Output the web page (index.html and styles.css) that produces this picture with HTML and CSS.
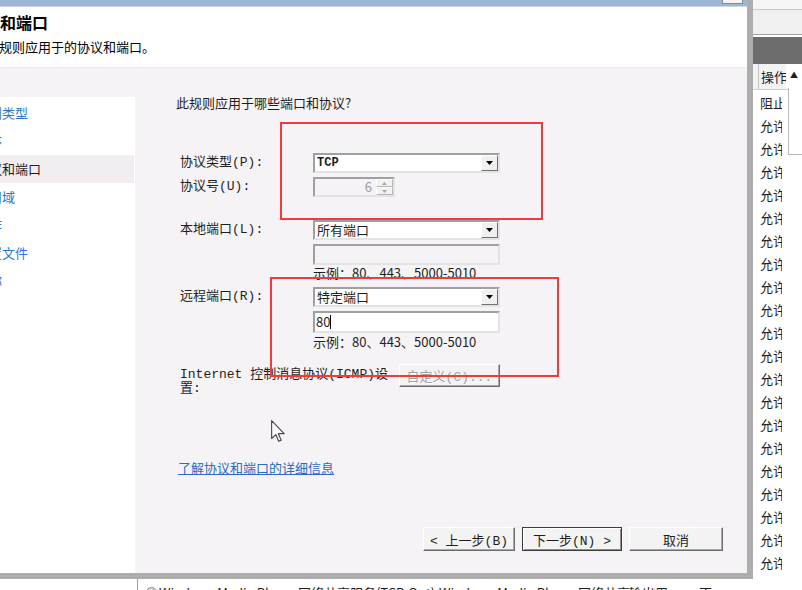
FILE: index.html
```html
<!DOCTYPE html>
<html lang="zh-CN">
<head>
    <meta charset="UTF-8">
    <meta name="viewport" content="width=device-width, initial-scale=1.0">
    <title>新建入站规则向导 - 协议和端口</title>
    <link rel="stylesheet" href="styles.css">
</head>
<body>

<div class="screen">
    <div class="main">
        <!-- Wizard window -->
        <div class="wizard">
            <div class="titlebar"><div class="close-btn"></div></div>

            <div class="header">
                <h1 class="page-title">协议和端口</h1>
                <p class="page-desc">指定此规则应用于的协议和端口。</p>
            </div>

            <div class="wizard-body">
                <!-- Steps -->
                <div class="steps">
                    <ul class="step-list">
                        <li class="step">规则类型</li>
                        <li class="step">程序</li>
                        <li class="step current">协议和端口</li>
                        <li class="step">作用域</li>
                        <li class="step">操作</li>
                        <li class="step">配置文件</li>
                        <li class="step">名称</li>
                    </ul>
                </div>

                <!-- Page content -->
                <div class="content">
                    <p class="question">此规则应用于哪些端口和协议?</p>

                    <div class="form">
                        <div class="row">
                            <label class="label">协议类型(P):</label>
                            <div class="field">
                                <div class="combo">
                                    <span class="combo-text mono">TCP</span>
                                    <span class="drop-btn"><svg width="7" height="4" viewBox="0 0 7 4"><path d="M0 0h7L3.5 4z" fill="#000"/></svg></span>
                                </div>
                            </div>
                        </div>

                        <div class="row row-number">
                            <label class="label">协议号(U):</label>
                            <div class="field">
                                <div class="spinner">
                                    <span class="spin-value">6</span>
                                    <span class="spin-btns">
                                        <span class="spin-btn"><svg width="5" height="3" viewBox="0 0 5 3"><path d="M0 3h5L2.5 0z" fill="#a8a8a8"/></svg></span>
                                        <span class="spin-btn"><svg width="5" height="3" viewBox="0 0 5 3"><path d="M0 0h5L2.5 3z" fill="#a8a8a8"/></svg></span>
                                    </span>
                                </div>
                            </div>
                        </div>

                        <div class="row row-local">
                            <label class="label">本地端口(L):</label>
                            <div class="field">
                                <div class="combo">
                                    <span class="combo-text">所有端口</span>
                                    <span class="drop-btn"><svg width="7" height="4" viewBox="0 0 7 4"><path d="M0 0h7L3.5 4z" fill="#000"/></svg></span>
                                </div>
                                <div class="textbox disabled"></div>
                                <div class="example">示例：80、443、5000-5010</div>
                            </div>
                        </div>

                        <div class="row row-remote">
                            <label class="label">远程端口(R):</label>
                            <div class="field">
                                <div class="combo">
                                    <span class="combo-text">特定端口</span>
                                    <span class="drop-btn"><svg width="7" height="4" viewBox="0 0 7 4"><path d="M0 0h7L3.5 4z" fill="#000"/></svg></span>
                                </div>
                                <div class="textbox active"><span class="typed">80</span><span class="caret"></span></div>
                                <div class="example second">示例：80、443、5000-5010</div>
                            </div>
                        </div>

                        <div class="row row-icmp">
                            <label class="label label-wide">Internet 控制消息协议(ICMP)设置:</label>
                            <button class="btn btn-disabled" disabled>自定义(C)...</button>
                        </div>
                    </div>

                    <a class="more-link" href="#">了解协议和端口的详细信息</a>

                    <div class="buttons">
                        <button class="btn btn-back">&lt; 上一步(B)</button>
                        <button class="btn btn-next">下一步(N) &gt;</button>
                        <button class="btn btn-cancel">取消</button>
                    </div>

                    <!-- annotation boxes and mouse pointer -->
                    <div class="mark mark-protocol"></div>
                    <div class="mark mark-remote"></div>
                    <svg class="cursor" width="14" height="22" viewBox="0 0 12 19">
                        <path d="M0.5 0.5V16l3.6-3.4 2.5 5.8 2.2-1-2.5-5.6h5z" fill="#fff" stroke="#4a4a4a" stroke-width="1" stroke-linejoin="round"/>
                    </svg>
                </div>
            </div>
        </div>

        <!-- Rule list behind the wizard -->
        <div class="bottom-list">
            <div class="bl-left"></div>
            <div class="bl-row">
                <span class="bl-icon"></span>
                <span class="bl-name">Windows Media Player 网络共享服务(TCP-Out)</span>
                <span class="bl-group">Windows Media Player 网络共享</span>
                <span class="bl-dir">输出用</span>
                <span class="bl-flag">否</span>
            </div>
        </div>
    </div>

    <!-- Actions column on the right -->
    <div class="side">
        <div class="side-top"></div>
        <div class="side-toolbar"></div>
        <div class="side-band"></div>
        <div class="side-head">
            <span class="col-name">操作</span>
            <span class="sort">▲</span>
        </div>
        <ul class="side-rows">
            <li>阻止</li>
            <li>允许</li>
            <li>允许</li>
            <li>允许</li>
            <li>允许</li>
            <li>允许</li>
            <li>允许</li>
            <li>允许</li>
            <li>允许</li>
            <li>允许</li>
            <li>允许</li>
            <li>允许</li>
            <li>允许</li>
            <li>允许</li>
            <li>允许</li>
            <li>允许</li>
            <li>允许</li>
            <li>允许</li>
            <li>允许</li>
            <li>允许</li>
            <li>允许</li>
        </ul>
        <div class="side-popup"></div>
    </div>
</div>

</body>
</html>
```

FILE: styles.css
```css
* {
    box-sizing: border-box;
}
body {
    margin: 0;
    width: 802px;
    height: 590px;
    overflow: hidden;
    background-color: #fff;
    font-family: "Noto Sans CJK SC", sans-serif;
    font-size: 13px;
    color: #1e1e1e;
}
.mono {
    font-family: "Liberation Mono", "Noto Sans CJK SC", monospace;
}
.screen {
    display: flex;
    height: 590px;
}
.main {
    width: 753px;
    display: flex;
    flex-direction: column;
}

/* wizard window */
.wizard {
    height: 579px;
    display: flex;
    flex-direction: column;
    background-color: #f6f3f6;
    border-right: 6px solid #adadad;
    border-bottom: 6px solid #adadad;
}
.titlebar {
    height: 7px;
    display: flex;
    background-color: #9db6d6;
    border-bottom: 1px solid #c6d4e6;
}
.close-btn {
    width: 21px;
    height: 4px;
    margin-left: auto;
    margin-right: 4px;
    background-color: #f4f4f4;
    border: 1px solid #8a8a8a;
    border-top: none;
}
.header {
    height: 61px;
    padding-top: 5px;
    background-color: #fff;
    border-bottom: 1px solid #efecef;
    overflow: hidden;
    white-space: nowrap;
}
.page-title {
    margin: 0 0 0 -32px;
    font-size: 16px;
    line-height: 20px;
    font-weight: bold;
    color: #000;
}
.page-desc {
    margin: 7px 0 0 -40px;
    font-size: 13px;
    line-height: 16px;
    color: #000;
}
.wizard-body {
    flex: 1;
    display: flex;
    min-height: 0;
}

/* steps on the left */
.steps {
    width: 135px;
    padding-top: 29px;
    display: flex;
    flex-direction: column;
}
.step-list {
    flex: 1;
    margin: 0;
    padding: 2px 1px 0 0;
    list-style: none;
    background-color: #fff;
    overflow: hidden;
}
.step {
    height: 28px;
    line-height: 28px;
    text-indent: -24px;
    white-space: nowrap;
    color: #2a76cf;
}
.step.current {
    background-color: #f1edf1;
    color: #1e1e1e;
}

/* page content */
.content {
    flex: 1;
    position: relative;
    display: flex;
    flex-direction: column;
    padding: 27px 24px 22px 41px;
}
.question {
    margin: 0;
    line-height: 16px;
}
.form {
    margin: 42px 0 0 4px;
}
.row {
    display: flex;
    align-items: flex-start;
}
.row-number {
    margin-top: 4px;
}
.row-local {
    margin-top: 23px;
}
.row-remote {
    margin-top: 7px;
}
.row-icmp {
    margin-top: 15px;
}
.label {
    width: 133px;
    flex: none;
    line-height: 20px;
    font-family: "Liberation Mono", "Noto Sans CJK SC", monospace;
}
.label-wide {
    width: 219px;
    margin-top: 4px;
    line-height: 14px;
}
.field {
    width: 187px;
    display: flex;
    flex-direction: column;
}
.combo, .spinner, .textbox {
    border: 2px solid;
    border-color: #a0a0a0 #e3e3e3 #e3e3e3 #a0a0a0;
}
.combo {
    height: 20px;
    display: flex;
    align-items: center;
    background-color: #fff;
}
.combo-text {
    flex: 1;
    padding-left: 2px;
    line-height: 16px;
}
.combo-text.mono {
    font-size: 12px;
    font-weight: bold;
}
.drop-btn {
    width: 17px;
    height: 16px;
    display: flex;
    align-items: center;
    justify-content: center;
    background-color: #f0f0f0;
    border: 1px solid;
    border-color: #fff #707070 #707070 #fff;
}
.spinner {
    width: 82px;
    height: 20px;
    display: flex;
    background-color: #f6f3f6;
}
.spin-value {
    flex: 1;
    text-align: right;
    padding-right: 4px;
    line-height: 16px;
    color: #9c9c9c;
}
.spin-btns {
    width: 17px;
    display: flex;
    flex-direction: column;
}
.spin-btn {
    flex: 1;
    display: flex;
    align-items: center;
    justify-content: center;
    background-color: #f2f2f2;
    border: 1px solid;
    border-color: #fff #b5b5b5 #b5b5b5 #fff;
}
.textbox {
    margin-top: 4px;
    height: 21px;
    display: flex;
    align-items: center;
}
.textbox.disabled {
    background-color: #f6f3f6;
}
.textbox.active {
    height: 22px;
    background-color: #fff;
    padding-left: 1px;
}
.typed {
    line-height: 16px;
}
.caret {
    width: 1px;
    height: 14px;
    background-color: #000;
}
.example {
    margin-top: 1px;
    line-height: 14px;
    white-space: nowrap;
}
.example.second {
    margin-top: 2px;
}

.more-link {
    align-self: flex-start;
    margin: 64px 0 0 2px;
    line-height: 16px;
    color: #2a6bc5;
    text-decoration: underline;
}

/* buttons */
.btn {
    height: 23px;
    padding: 0;
    font-family: "Liberation Mono", "Noto Sans CJK SC", monospace;
    font-size: 13px;
    color: #1e1e1e;
    background-color: #f3f3f3;
    border: 1px solid;
    border-color: #fff #6b6b6b #6b6b6b #fff;
    box-shadow: inset -1px -1px 0 #a9a9a9;
}
.btn-disabled {
    width: 101px;
    color: #a3a3a3;
    text-shadow: 1px 1px 0 #fff;
}
.buttons {
    margin-top: auto;
    display: flex;
    justify-content: flex-end;
    gap: 7px;
}
.buttons .btn {
    height: 24px;
}
.btn-back {
    width: 92px;
}
.btn-next {
    width: 100px;
    border-color: #3c3c3c;
    box-shadow: inset 1px 1px 0 #fff, inset -1px -1px 0 #8e8e8e;
}
.btn-cancel {
    width: 94px;
}

/* red annotation boxes over the form */
.mark {
    position: absolute;
    border: 2px solid #ef3b3b;
}
.mark-protocol {
    left: 145px;
    top: 54px;
    width: 263px;
    height: 98px;
}
.mark-remote {
    left: 135px;
    top: 209px;
    width: 289px;
    height: 100px;
}
.cursor {
    position: absolute;
    left: 136px;
    top: 352px;
}

/* list behind the wizard */
.bottom-list {
    flex: 1;
    display: flex;
    overflow: hidden;
}
.bl-left {
    width: 138px;
    border-right: 1px solid #9c9c9c;
}
.bl-row {
    display: flex;
    align-items: flex-start;
    padding: 6px 0 0 8px;
    white-space: nowrap;
    line-height: 16px;
}
.bl-icon {
    width: 11px;
    height: 11px;
    margin: 2px 2px 0 0;
    border-radius: 50%;
    border: 1px solid #8a8a8a;
    background-color: #d6d6d6;
}
.bl-name {
    width: 280px;
}
.bl-group {
    width: 190px;
}
.bl-dir {
    width: 70px;
}

/* right side column */
.side {
    flex: 1;
    position: relative;
    display: flex;
    flex-direction: column;
    background-color: #fff;
    overflow: hidden;
}
.side-top {
    height: 10px;
    background-color: #f6f6f6;
    border-bottom: 1px solid #cacaca;
}
.side-toolbar {
    height: 25px;
    background-color: #f0f0f0;
    border-bottom: 1px solid #a3a3a3;
}
.side-band {
    height: 27px;
    margin-top: 2px;
    background-color: #6d6d6d;
}
.side-head {
    height: 26px;
    display: flex;
    padding-left: 5px;
    background-color: #f3f3f3;
    border-bottom: 1px solid #d0d0d0;
}
.col-name {
    width: 28px;
    padding-left: 2px;
    line-height: 25px;
    border-left: 1px solid #c4c4c4;
    overflow: hidden;
    white-space: nowrap;
}
.sort {
    flex: 1;
    text-align: center;
    font-size: 8px;
    line-height: 22px;
    background-color: #fff;
}
.side-rows {
    margin: 1px 0 0;
    padding: 0;
    list-style: none;
}
.side-rows li {
    width: 29px;
    height: 23px;
    padding-left: 7px;
    line-height: 23px;
    overflow: hidden;
    white-space: nowrap;
}
.side-popup {
    position: absolute;
    left: 35px;
    top: 88px;
    width: 16px;
    height: 67px;
    background-color: #fff;
    border-left: 1px solid #b9b9b9;
    border-bottom: 1px solid #b9b9b9;
}
```
